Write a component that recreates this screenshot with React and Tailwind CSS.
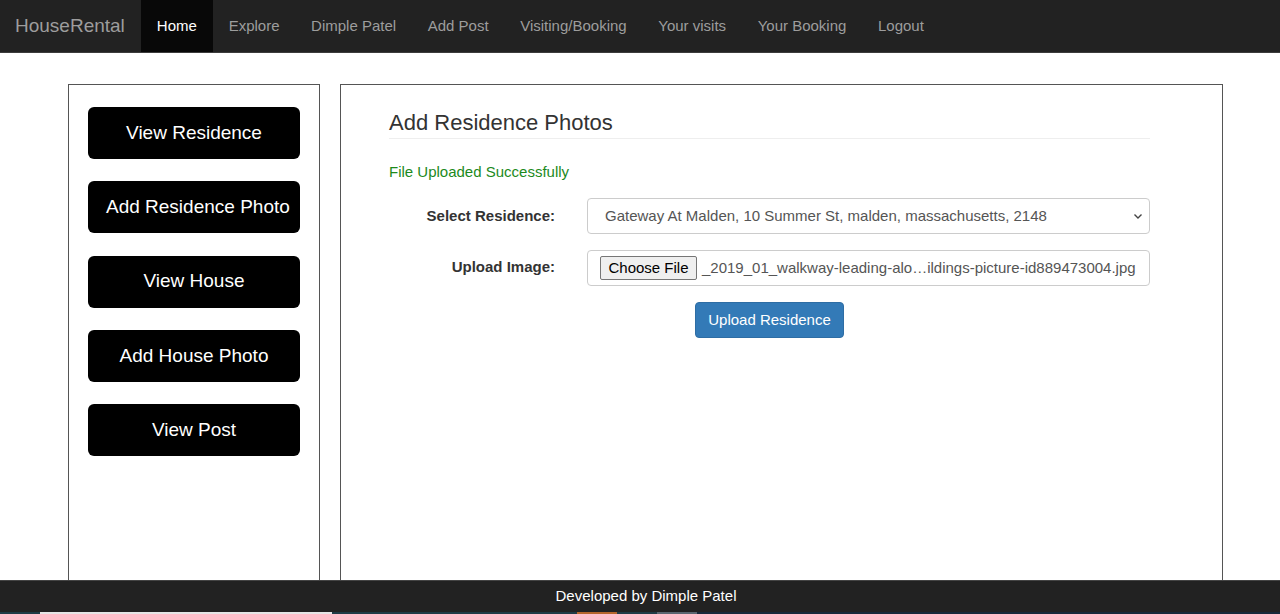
import React from "react";

const navItems = ["Explore", "Dimple Patel", "Add Post", "Visiting/Booking", "Your visits", "Your Booking", "Logout"];
const sideButtons = ["View Residence", "Add Residence Photo", "View House", "Add House Photo", "View Post"];

export default function App() {
  return (
    <div className="h-[614px] w-[1280px] overflow-hidden flex flex-col bg-white font-['Liberation_Sans',Arial,sans-serif]">
      {/* Navbar */}
      <nav className="h-[53px] shrink-0 bg-[#222222] border-b border-[#3c3c3c] flex items-stretch text-[15px]">
        <div className="pl-[15px] pr-4 flex items-center text-[19px] text-[#9d9d9d]">HouseRental</div>
        <div className="px-4 flex items-center bg-[#080808] text-white">Home</div>
        {navItems.map((n) => (
          <div key={n} className="px-[15.8px] flex items-center text-[#9d9d9d]">{n}</div>
        ))}
      </nav>

      {/* Main */}
      <main className="flex-1 min-h-0 overflow-hidden pt-[31px] pl-[68px] pr-[57px] flex gap-5">
        <aside className="w-[252px] shrink-0 border-x border-t border-[#555] pt-[22px] px-[19px] flex flex-col gap-[22.3px]">
          {sideButtons.map((b) => (
            <div
              key={b}
              className="h-[52px] shrink-0 w-[212px] rounded-[6px] bg-black text-white text-[19px] px-[18px] flex items-center justify-center whitespace-nowrap"
            >
              <span className="block w-full text-center">{b}</span>
            </div>
          ))}
        </aside>

        <section className="flex-1 border-x border-t border-[#555] pl-12 pr-[72px] pt-[24px]">
          <h2 className="text-[22px] text-[#333] leading-[28px] pb-[1px] border-b border-[#eeeeee]">Add Residence Photos</h2>
          <p className="mt-[23px] text-[15px] text-[#1c8a1c] leading-[20px]">File Uploaded Successfully</p>

          <div className="mt-[16px] flex items-center">
            <label className="w-[166px] text-right text-[15px] font-bold text-[#333]">Select Residence:</label>
            <div className="ml-[32px] flex-1 relative">
              <select className="appearance-none block w-full h-[36px] border border-[#cccccc] rounded-[4px] pl-[17px] pr-8 text-[15px] text-[#555] bg-white font-['Liberation_Sans',Arial,sans-serif]">
                <option>Gateway At Malden, 10 Summer St, malden, massachusetts, 2148</option>
              </select>
              <svg className="absolute right-[7px] top-[14px]" width="10" height="8" viewBox="0 0 10 8" fill="none">
                <path d="M1.5 2.5 L5 6 L8.5 2.5" stroke="#444" strokeWidth="1.4" />
              </svg>
            </div>
          </div>

          <div className="mt-[16px] flex items-center">
            <label className="w-[166px] text-right text-[15px] font-bold text-[#333] -mt-[2px]">Upload Image:</label>
            <div className="ml-[32px] flex-1 h-[36px] border border-[#cccccc] rounded-[4px] flex items-center pl-3 text-[15px] text-[#555] overflow-hidden whitespace-nowrap">
              <span className="h-[24px] w-[97px] shrink-0 border border-[#767676] rounded-[2px] bg-[#efefef] text-black flex items-center justify-center">Choose File</span>
              <span className="ml-[5px]">_2019_01_walkway-leading-alo…ildings-picture-id889473004.jpg</span>
            </div>
          </div>

          <div className="mt-[16px] flex justify-center">
            <div className="h-[36px] w-[149px] bg-[#337ab7] border border-[#2e6da4] rounded-[4px] text-white text-[15px] flex items-center justify-center">Upload Residence</div>
          </div>
        </section>
      </main>

      {/* Footer */}
      <footer className="h-[32px] shrink-0 bg-[#222222] border-t border-[#444] flex items-center justify-center pl-3 text-white text-[15px]">
        Developed by Dimple Patel
      </footer>

      {/* Taskbar strip */}
      <div className="h-[2px] shrink-0 flex bg-[#1c3340]">
        <div className="w-[40px] bg-[#1f3b45]" />
        <div className="w-[292px] bg-[#e6e6e6]" />
        <div className="w-[245px] bg-[#1f3b45]" />
        <div className="w-[40px] bg-[#b5652a]" />
        <div className="w-[40px] bg-[#1f3b45]" />
        <div className="w-[40px] bg-[#5a6670]" />
        <div className="flex-1 bg-[#17293a]" />
      </div>
    </div>
  );
}
